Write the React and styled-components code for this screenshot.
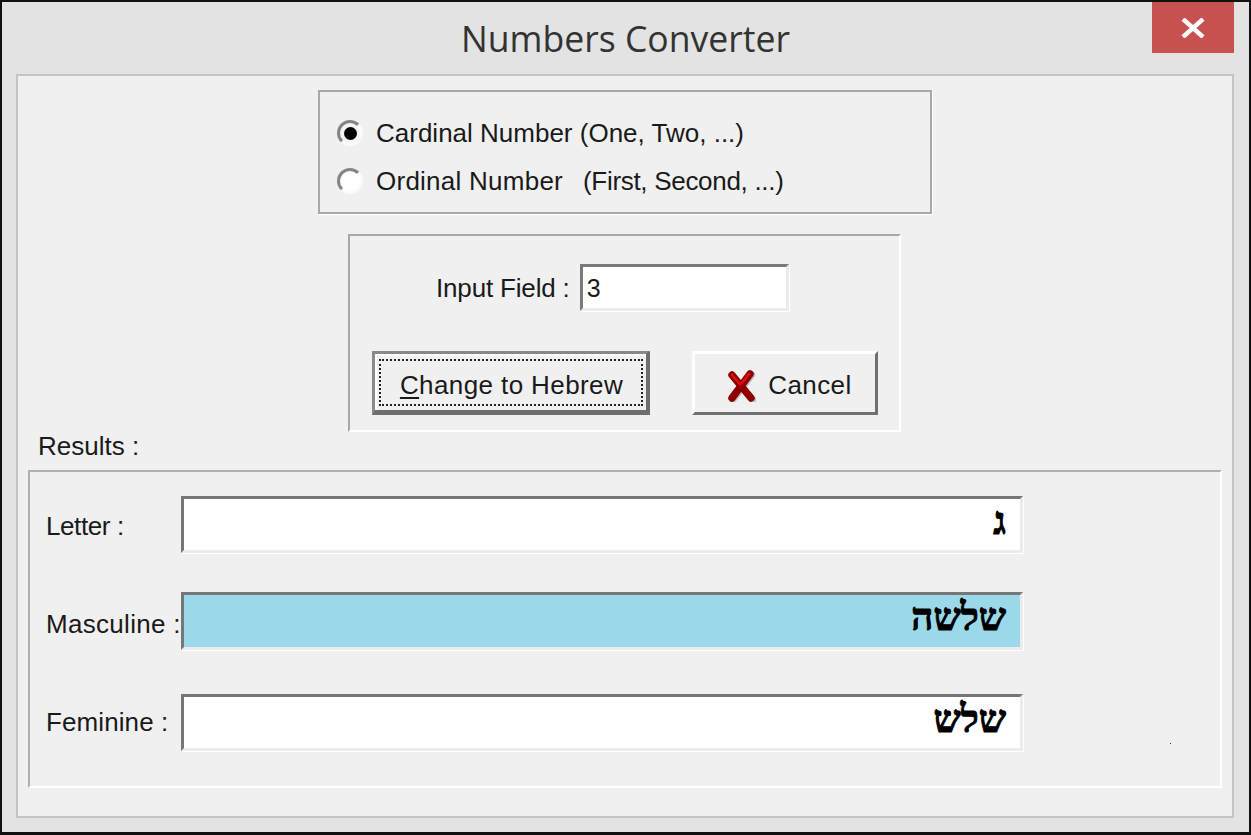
import React from 'react';
import styled, { createGlobalStyle } from 'styled-components';

const Global = createGlobalStyle`
  html, body { margin: 0; padding: 0; background: #e3e3e3; }
  * { box-sizing: border-box; }
`;

const Window = styled.div`
  position: relative;
  width: 1251px;
  height: 835px;
  display: flex;
  flex-direction: column;
  border: solid #111;
  border-width: 2px 2px 3px 2px;
  background: #e3e3e3;
  font-family: "Liberation Sans", Arial, sans-serif;
  color: #1a1a1a;
  overflow: hidden;
`;

const TitleBar = styled.div`
  height: 72px;
  flex: none;
  display: flex;
  align-items: center;
  justify-content: center;
  padding-bottom: 1px;
`;

const Title = styled.h1`
  margin: 0;
  font-family: "Open Sans", sans-serif;
  font-weight: 400;
  font-size: 35.6px;
  color: #333;
`;

const CloseButton = styled.div`
  position: absolute;
  top: 0;
  right: 15px;
  width: 82px;
  height: 51px;
  display: flex;
  align-items: center;
  justify-content: center;
  background: #c75050;
`;

const Panel = styled.div`
  flex: 1;
  margin: 0 15px 14px 14px;
  display: flex;
  flex-direction: column;
  align-items: flex-start;
  background: #f0f0f0;
  border: 2px solid #c4c4c4;
`;

const RadioBox = styled.div`
  margin: 14px 0 0 300px;
  width: 614px;
  height: 124px;
  display: flex;
  flex-direction: column;
  gap: 20px;
  padding: 27px 0 0 17px;
  border: 2px solid #a8a8a8;
  box-shadow: 1px 1px 0 #fff;
`;

const RadioRow = styled.div`
  display: flex;
  align-items: center;
  gap: 13px;
  height: 28px;
  font-size: 26px;
  letter-spacing: ${p => (p.$wide ? '0.25px' : '0')};
  white-space: pre;
`;

const RadioNote = styled.span`
  margin-left: 5px;
  letter-spacing: -0.3px;
`;

const Radio = styled.span`
  width: 26px;
  height: 26px;
  flex: none;
  border-radius: 50%;
  border: 3px solid;
  border-color: #858585 #fafafa #fafafa #858585;
  background: ${p => (p.$on ? '#f4f4f4' : '#fff')};
  display: flex;
  align-items: center;
  justify-content: center;
  &::after {
    content: '';
    display: ${p => (p.$on ? 'block' : 'none')};
    width: 13px;
    height: 13px;
    border-radius: 50%;
    background: #000;
  }
`;

const InputBox = styled.div`
  margin: 20px 0 0 330px;
  width: 553px;
  height: 198px;
  border: solid 2px;
  border-color: #a8a8a8 #fff #fff #a8a8a8;
  display: flex;
  flex-direction: column;
  padding: 28px 0 0 22px;
`;

const InputRow = styled.div`
  display: flex;
  align-items: center;
  margin-left: 64px;
  gap: 10px;
  font-size: 26px;
  letter-spacing: -0.17px;
`;

const InputLabel = styled.span`
  padding-top: 2px;
`;

const SmallInput = styled.div`
  width: 209px;
  height: 47px;
  padding: 4px 0 0 4px;
  background: #fff;
  border: solid 3px;
  border-color: #7a7a7a #ececec #ececec #7a7a7a;
  box-shadow: 1px 1px 0 #fff;
  font-size: 25px;
  line-height: 34px;
`;

const ButtonRow = styled.div`
  display: flex;
  gap: 42px;
  margin-top: 40px;
`;

const Button = styled.div`
  position: relative;
  flex: none;
  width: ${p => p.$w}px;
  height: 64px;
  padding: ${p => (p.$focus ? '6px 0 0 2px' : '5px 0 0 8px')};
  display: flex;
  align-items: center;
  justify-content: center;
  gap: 12px;
  font-size: 26px;
  letter-spacing: 0.4px;
  background: #f0f0f0;
  border: solid;
  border-width: ${p => (p.$focus ? '3px 4px 5px 3px' : '3px')};
  border-color: ${p => (p.$focus ? '#8a8a8a #6e6e6e #6e6e6e #8a8a8a' : '#fff #707070 #707070 #fff')};
  ${p => p.$focus && 'box-shadow: inset 2px 2px 0 #fff;'}
`;

const FocusRing = styled.span`
  position: absolute;
  inset: 5px 3px 4px 4px;
  border: 2px dotted #222;
  pointer-events: none;
`;

const Mnemonic = styled.span`
  text-decoration: underline;
  text-underline-offset: 3px;
`;

const ResultsLabel = styled.div`
  margin: 0 0 0 20px;
  height: 38px;
  display: flex;
  align-items: flex-end;
  padding-bottom: 8px;
  font-size: 26px;
`;

const ResultsBox = styled.div`
  position: relative;
  margin-left: 10px;
  width: 1194px;
  height: 318px;
  border: solid 2px;
  border-color: #b0b0b0 #fff #fff #b0b0b0;
  display: flex;
  flex-direction: column;
  padding: 24px 0 0 16px;
`;

const ResultRow = styled.div`
  display: flex;
  align-items: center;
  margin-bottom: ${p => p.$gap}px;
`;

const ResultLabel = styled.div`
  width: 135px;
  flex: none;
  padding-top: ${p => p.$dy}px;
  font-size: 26px;
  letter-spacing: ${p => p.$ls}px;
  white-space: nowrap;
`;

const ResultField = styled.div`
  width: 842px;
  height: ${p => (p.$hl ? 58 : 57)}px;
  padding: 0 14px 8px 0;
  display: flex;
  align-items: center;
  justify-content: flex-start;
  direction: rtl;
  background: ${p => (p.$hl ? '#9ad8ea' : '#fff')};
  border: solid 3px;
  border-color: #767676 #ececec #ececec #767676;
  box-shadow: 1px 1px 0 #fff;
  font-family: "Liberation Serif", "DejaVu Serif", serif;
  font-weight: 700;
  font-size: 38.5px;
  -webkit-text-stroke: 1px #000;
  color: #000;
`;

const Speck = styled.span`
  position: absolute;
  left: 1140px;
  top: 271px;
  width: 1px;
  height: 1px;
  background: #333;
`;

const CloseIcon = () => (
  <svg width="24" height="20" viewBox="0 0 24 20">
    <path d="M2 1 L22 19 M22 1 L2 19" stroke="#fff" strokeWidth="4.4" fill="none" />
  </svg>
);

const CancelIcon = () => (
  <svg width="30" height="32" viewBox="0 0 30 32">
    <path d="M6 5 L26 29 M25 4 L6 29" stroke="#8a8a8a" strokeWidth="7" strokeLinecap="round" fill="none" opacity="0.55" transform="translate(0.6 0.8)" />
    <path d="M6 5 L25 28 M24 4 L6 28" stroke="#8e0000" strokeWidth="7.4" strokeLinecap="round" fill="none" />
    <path d="M6 5 L14 14 M23 4 L16 13" stroke="#e00d0d" strokeWidth="2.6" strokeLinecap="round" fill="none" />
  </svg>
);

export default function App() {
  return (
    <Window>
      <Global />
      <TitleBar>
        <Title>Numbers Converter</Title>
      </TitleBar>
      <CloseButton><CloseIcon /></CloseButton>
      <Panel>
        <RadioBox>
          <RadioRow><Radio $on /><span>Cardinal Number (One, Two, ...)</span></RadioRow>
          <RadioRow $wide><Radio /><span>Ordinal Number  <RadioNote>(First, Second, ...)</RadioNote></span></RadioRow>
        </RadioBox>
        <InputBox>
          <InputRow><InputLabel>Input Field :</InputLabel><SmallInput>3</SmallInput></InputRow>
          <ButtonRow>
            <Button $w={278} $focus><FocusRing /><span><Mnemonic>C</Mnemonic>hange to Hebrew</span></Button>
            <Button $w={186}><CancelIcon />Cancel</Button>
          </ButtonRow>
        </InputBox>
        <ResultsLabel>Results :</ResultsLabel>
        <ResultsBox>
          <ResultRow $gap={39}><ResultLabel $dy={3} $ls={-0.4}>Letter :</ResultLabel><ResultField>ג</ResultField></ResultRow>
          <ResultRow $gap={44}><ResultLabel $dy={6} $ls={0.3}>Masculine :</ResultLabel><ResultField $hl>שלשה</ResultField></ResultRow>
          <ResultRow $gap={0}><ResultLabel $dy={0} $ls={0.1}>Feminine :</ResultLabel><ResultField>שלש</ResultField></ResultRow>
          <Speck />
        </ResultsBox>
      </Panel>
    </Window>
  );
}
